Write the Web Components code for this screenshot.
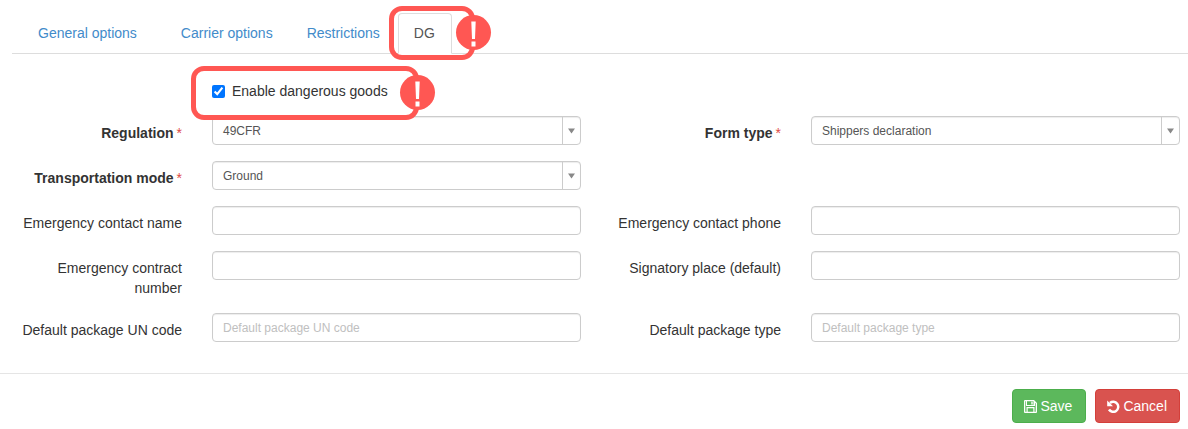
<!DOCTYPE html>
<html><head><meta charset="utf-8">
<style>
html,body{margin:0;padding:0;background:#fff}
body{font:14px/20px "Liberation Sans",Arial,sans-serif;color:#333;width:1188px;height:429px;overflow:hidden;position:relative}
</style></head><body>
<template id="t-tabs"><style>
:host{display:flex;margin:13px 0 0 12px;height:40px;border-bottom:1px solid #ddd;align-items:stretch}
</style><slot></slot></template>
<template id="t-tab"><style>
:host{display:block;box-sizing:border-box;height:41px;padding:9px 16px;color:#428bca;margin-left:var(--ml,0);border:1px solid transparent;border-radius:4px 4px 0 0}
:host([active]){color:#555;background:#fff;border-color:#ddd #ddd #fff;padding:9px 16px 9px 15px}
</style><slot></slot></template>
<template id="t-check"><style>
:host{display:flex;align-items:center;margin:27px 0 15px 212px;height:20px;gap:7px;color:#333}
input{margin:0;width:13px;height:13px;accent-color:#0075ff}
</style><input type="checkbox" checked><slot></slot></template>
<template id="t-form"><style>
:host{display:grid;grid-template-columns:569px 569px;column-gap:30px;row-gap:16px;margin-left:12px}
</style><slot></slot></template>
<template id="t-field"><style>
:host{display:flex;gap:30px;align-items:flex-start}
.l{width:170px;flex:none;text-align:right;padding-top:7px;margin-bottom:-1px;line-height:20px;color:#333}
:host([req]) .l{font-weight:700}
.s{display:none;color:#e04a46;font-weight:400;margin-left:3px}
:host([req]) .s{display:inline}
.c{flex:1;min-width:0;display:block}
</style><div class="l"><slot name="label"></slot><span class="s">*</span></div><div class="c"><slot></slot></div></template>
<template id="t-select"><style>
:host{display:flex;box-sizing:border-box;height:29px;border:1px solid #ccc;border-radius:4px;background:#fff;font-size:12px;color:#555;box-shadow:inset 0 1px 1px rgba(0,0,0,.075)}
.v{flex:1;padding:0 10px;line-height:28px}
.a{width:17px;border-left:1px solid #ccc;display:flex;align-items:center;justify-content:center}
svg{display:block}
</style><div class="v"><slot></slot></div><div class="a"><svg width="7" height="6" viewBox="0 0 7 6"><path d="M0 .5h7L3.500 5.500z" fill="#888"/></svg></div></template>
<template id="t-input"><style>
:host{display:block}
input{display:block;box-sizing:border-box;width:100%;height:29px;margin:0;padding:0 10px;border:1px solid #ccc;border-radius:4px;font:12px "Liberation Sans",Arial,sans-serif;color:#555;background:#fff;box-shadow:inset 0 1px 1px rgba(0,0,0,.075);outline:0}
input::placeholder{color:#c0c0c0;opacity:1}
</style><input></template>
<template id="t-footer"><style>
:host{display:flex;justify-content:flex-end;gap:9px;margin-top:31px;border-top:1px solid #e5e5e5;padding:15px 8px 0 0}
</style><slot></slot></template>
<template id="t-btn"><style>
:host{display:flex;align-items:center;box-sizing:border-box;height:34px;padding:0 12px 0 11px;gap:3px;border-radius:4px;color:#fff;background:#5cb85c;border:1px solid #4cae4c}
:host([danger]){background:#d9534f;border-color:#d43f3a}
svg{display:block;flex:none}
</style><slot name="icon"></slot><slot></slot></template>
<template id="t-callout"><style>
:host{position:absolute;box-sizing:border-box;border:5px solid #ff5753;border-radius:13px;pointer-events:none}
.b{position:absolute;right:-21px;top:50%;width:35px;height:35px;margin-top:-17.5px;border-radius:50%;background:#ff5753}
svg{display:block}
</style><div class="b"><svg width="35" height="35" viewBox="0 0 35 35"><path d="M15.300 6.500h4.400l-.7 17.500h-3z M15.500 26.500h4v5h-4z" fill="#fff"/></svg></div></template>

<x-tabs>
  <x-tab style="--ml:9px;padding-right:26px">General options</x-tab>
  <x-tab style="padding-right:16px">Carrier options</x-tab>
  <x-tab>Restrictions</x-tab>
  <x-tab active style="--ml:1px">DG</x-tab>
</x-tabs>
<x-check>Enable dangerous goods</x-check>
<x-form>
  <x-field req><span slot="label">Regulation</span><x-select>49CFR</x-select></x-field>
  <x-field req><span slot="label">Form type</span><x-select>Shippers declaration</x-select></x-field>
  <x-field req><span slot="label">Transportation mode</span><x-select>Ground</x-select></x-field>
  <div></div>
  <x-field><span slot="label">Emergency contact name</span><x-input></x-input></x-field>
  <x-field><span slot="label">Emergency contact phone</span><x-input></x-input></x-field>
  <x-field><span slot="label">Emergency contract number</span><x-input></x-input></x-field>
  <x-field><span slot="label">Signatory place (default)</span><x-input></x-input></x-field>
  <x-field><span slot="label">Default package UN code</span><x-input ph="Default package UN code"></x-input></x-field>
  <x-field><span slot="label">Default package type</span><x-input ph="Default package type"></x-input></x-field>
</x-form>
<x-footer>
  <x-btn style="padding-right:13px"><svg slot="icon" width="13" height="13" viewBox="0 0 13 13"><path fill="#fff" fill-rule="evenodd" d="M1 0h9l3 3v9a1 1 0 0 1-1 1H1a1 1 0 0 1-1-1V1a1 1 0 0 1 1-1zM3 1.300v3.700h6.500V1.300zM7.300 1.800h1.400v2.600H7.300zM1.300 1.300v10.400H2.500V7h8v4.700h1.200V3.500L11 2.800V6H2V1.300zM3.700 8.200v3.500h5.600V8.200z"/></svg>Save</x-btn>
  <x-btn danger><svg slot="icon" width="13" height="13" viewBox="0 0 13 13"><path fill="none" stroke="#fff" stroke-width="2.500" d="M3 3a5 5 0 1 1-1 6.500"/><path fill="#fff" d="M.2 .5v5.800h5.800z"/></svg>Cancel</x-btn>
</x-footer>
<x-callout style="left:389px;top:6px;width:86px;height:53.500px"></x-callout>
<x-callout style="left:191px;top:66px;width:228px;height:53.500px"></x-callout>
<script>
function def(tag,tid,extra){
  customElements.define(tag,class extends HTMLElement{
    constructor(){super();const r=this.attachShadow({mode:'open'});r.appendChild(document.getElementById(tid).content.cloneNode(true));}
    connectedCallback(){if(extra)extra(this)}
  });
}
def('x-tabs','t-tabs');def('x-tab','t-tab');def('x-check','t-check');def('x-form','t-form');def('x-field','t-field');
def('x-select','t-select');def('x-footer','t-footer');def('x-btn','t-btn');def('x-callout','t-callout');
def('x-input','t-input',el=>{const p=el.getAttribute('ph');if(p)el.shadowRoot.querySelector('input').placeholder=p;});
</script>
</body></html>
